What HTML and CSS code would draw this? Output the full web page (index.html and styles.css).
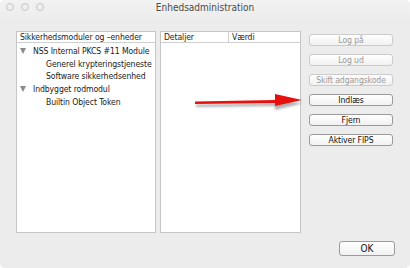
FILE: index.html
```html
<!DOCTYPE html>
<html>
<head>
<meta charset="utf-8">
<link rel="stylesheet" href="styles.css">
</head>
<body>
<div class="window">
  <div class="titlebar">
    <div class="lights">
      <span class="light"></span><span class="light"></span><span class="light"></span>
    </div>
    <div class="title">Enhedsadministration</div>
  </div>
  <div class="content">
    <div class="pane tree">
      <div class="header"><span class="col">Sikkerhedsmoduler og –enheder</span></div>
      <div class="rows">
        <div class="row parent"><span class="tri"></span>NSS Internal PKCS #11 Module</div>
        <div class="row child">Generel krypteringstjeneste</div>
        <div class="row child">Software sikkerhedsenhed</div>
        <div class="row parent"><span class="tri"></span>Indbygget rodmodul</div>
        <div class="row child">Builtin Object Token</div>
      </div>
    </div>
    <div class="pane details">
      <div class="header">
        <span class="col c1">Detaljer</span><span class="col c2">Værdi</span>
      </div>
    </div>
    <div class="buttons">
      <button class="btn disabled">Log på</button>
      <button class="btn disabled">Log ud</button>
      <button class="btn disabled">Skift adgangskode</button>
      <button class="btn">Indlæs</button>
      <button class="btn">Fjern</button>
      <button class="btn">Aktiver FIPS</button>
    </div>
  </div>
  <div class="footer">
    <button class="btn ok">OK</button>
  </div>
  <svg class="arrow" width="120" height="24" viewBox="0 0 120 24">
    <defs>
      <filter id="sh" x="-10%" y="-50%" width="120%" height="200%">
        <feGaussianBlur stdDeviation="1.2"/>
      </filter>
    </defs>
    <g transform="translate(0,2)" fill="#555" opacity="0.45" filter="url(#sh)">
      <polygon points="3,9.5 82,8 82,3 109,8.5 82,15 82,11 3,12"/>
    </g>
    <polygon points="2,8.5 82,7 82,1 109,7 82,13 82,10 2,11" fill="#e8100e"/>
  </svg>
</div>
</body>
</html>
```

FILE: styles.css
```css
html, body {
  margin: 0;
  padding: 0;
  background: #ffffff;
}
body {
  width: 410px;
  height: 268px;
  overflow: hidden;
  font-family: "DejaVu Sans Condensed", "DejaVu Sans", sans-serif;
  font-size: 8.6px;
  letter-spacing: -0.1px;
  color: #1a1a1a;
}
.window {
  position: relative;
  width: 410px;
  height: 268px;
  background: #ececec;
  border-radius: 5px;
  display: flex;
  flex-direction: column;
  overflow: hidden;
}
.titlebar {
  height: 22px;
  position: relative;
  display: flex;
  align-items: center;
  justify-content: center;
  background: linear-gradient(#f2f2f2, #ececec);
  flex: none;
}
.lights {
  position: absolute;
  left: 6px;
  top: 3px;
  display: flex;
  gap: 7px;
}
.light {
  width: 6px;
  height: 6px;
  border: 1px solid #c4c4c4;
  border-radius: 50%;
  background: #efefef;
}
.title {
  font-size: 10px;
  letter-spacing: 0;
  color: #4a4a4a;
  margin-top: -8px;
}
.content {
  display: flex;
  padding: 9px 0 0 16px;
  height: 202px;
  flex: none;
}
.pane {
  background: #fff;
  border: 1px solid #c6c6c6;
  box-sizing: border-box;
  height: 202px;
}
.tree {
  width: 140px;
}
.details {
  width: 141px;
  margin-left: 4px;
}
.header {
  height: 10px;
  border-bottom: 1px solid #cfcfcf;
  display: flex;
  line-height: 10px;
  color: #222;
}
.col {
  padding-left: 3px;
  white-space: nowrap;
}
.c1 {
  width: 64px;
  border-right: 1px solid #d0d0d0;
}
.rows {
  padding-top: 2px;
}
.row {
  height: 12.7px;
  line-height: 12.7px;
  white-space: nowrap;
  display: flex;
  align-items: center;
}
.parent {
  padding-left: 3px;
}
.child {
  padding-left: 29px;
}
.tri {
  width: 0;
  height: 0;
  border-left: 3.5px solid transparent;
  border-right: 3.5px solid transparent;
  border-top: 6px solid #8a8a8a;
  margin-right: 7px;
}
.buttons {
  display: flex;
  flex-direction: column;
  gap: 8px;
  margin-left: 8px;
  margin-top: 3px;
  width: 84px;
}
.btn {
  font-family: "DejaVu Sans Condensed", "DejaVu Sans", sans-serif;
  font-size: 8.6px;
  letter-spacing: -0.1px;
  height: 12px;
  padding: 0;
  margin: 0;
  line-height: 10px;
  border: 1px solid #9a9a9a;
  border-radius: 3px;
  background: linear-gradient(#ffffff, #f1f1f1);
  color: #111;
  box-sizing: border-box;
}
.btn.disabled {
  border-color: #cbcbcb;
  color: #9a9a9a;
}
.footer {
  display: flex;
  justify-content: flex-end;
  padding: 8px 15px 0 0;
}
.ok {
  width: 56px;
  height: 15px;
  font-size: 10px;
  letter-spacing: 0;
  line-height: 13px;
}
.arrow {
  position: absolute;
  left: 193px;
  top: 93px;
}
```
